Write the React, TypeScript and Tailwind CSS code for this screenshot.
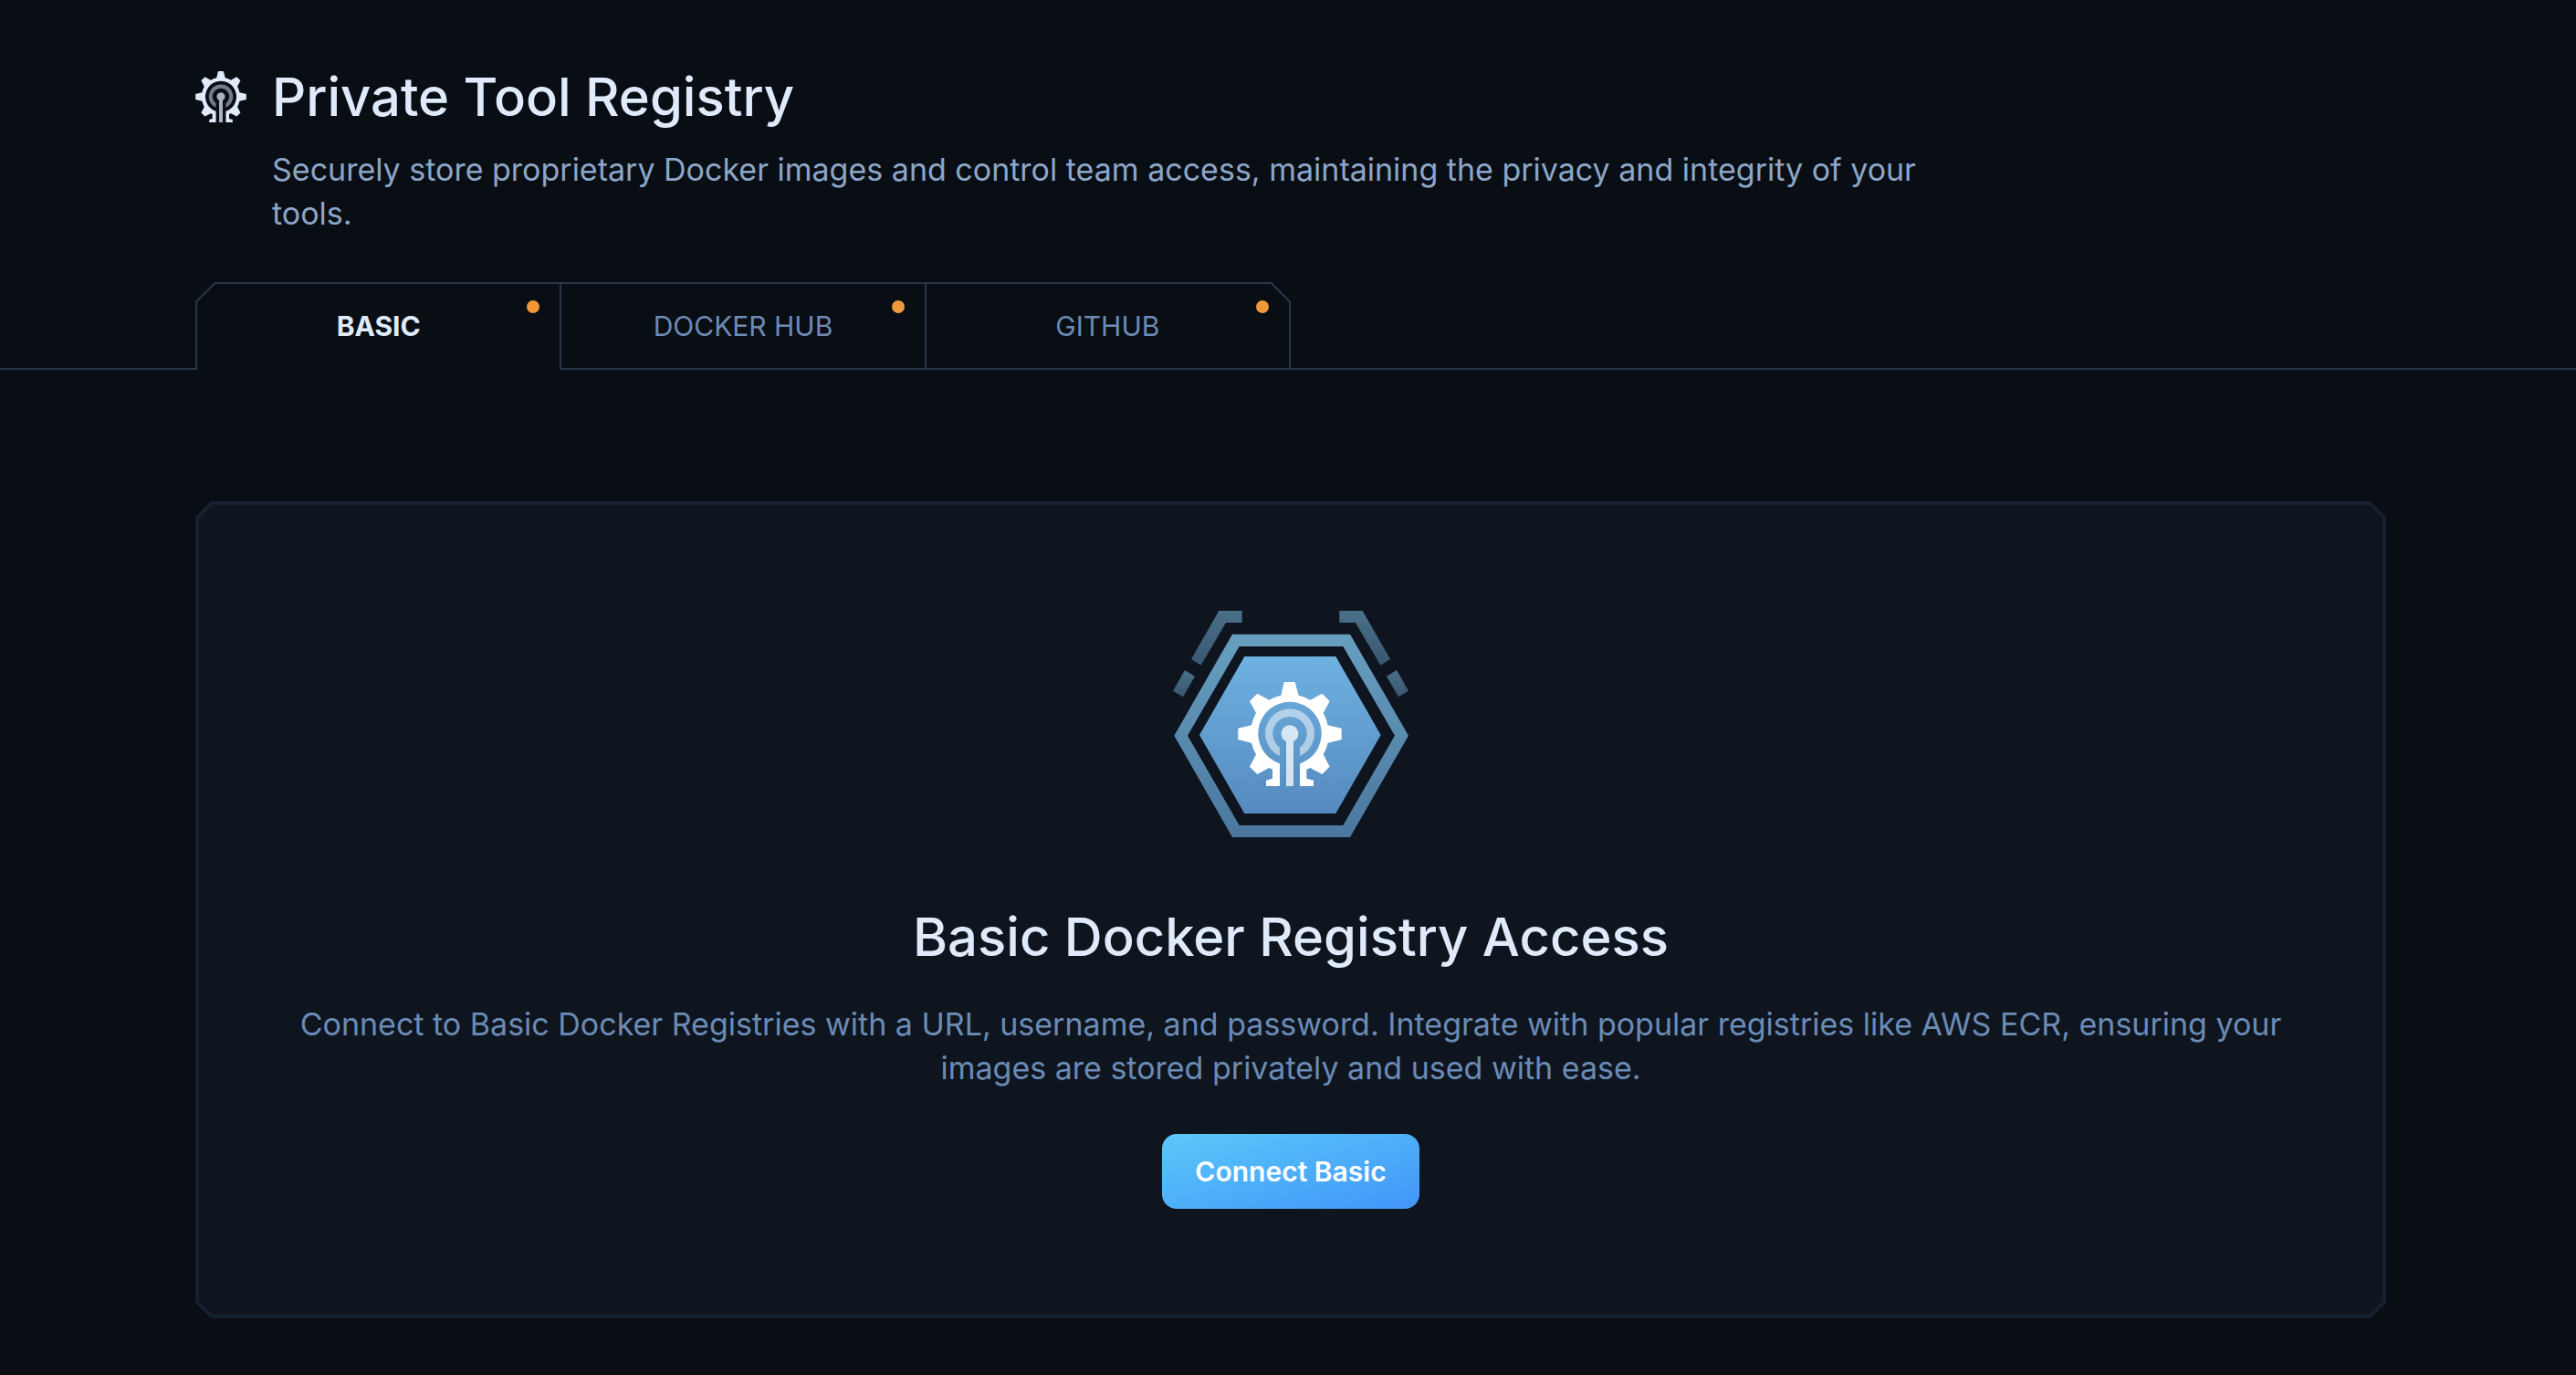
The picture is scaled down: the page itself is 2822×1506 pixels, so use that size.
import React, { useState } from 'react';

interface Tab {
  id: string;
  label: string;
  title: string;
  text: string;
  action: string;
  clip: string;
}

const TABS: Tab[] = [
  {
    id: 'basic',
    label: 'BASIC',
    title: 'Basic Docker Registry Access',
    text: 'Connect to Basic Docker Registries with a URL, username, and password. Integrate with popular registries like AWS ECR, ensuring your images are stored privately and used with ease.',
    action: 'Connect Basic',
    clip: '[clip-path:polygon(20px_0,100%_0,100%_100%,0_100%,0_20px)]',
  },
  {
    id: 'dockerhub',
    label: 'DOCKER HUB',
    title: 'Docker Hub Registry Access',
    text: 'Connect to Docker Hub with a username and an access token.',
    action: 'Connect Docker Hub',
    clip: '',
  },
  {
    id: 'github',
    label: 'GITHUB',
    title: 'GitHub Registry Access',
    text: 'Connect to the GitHub Container Registry with a username and an access token.',
    action: 'Connect GitHub',
    clip: '[clip-path:polygon(0_0,calc(100%-20px)_0,100%_20px,100%_100%,0_100%)]',
  },
];

// Gear with the broadcast symbol, drawn in a 342 x 342 box
function GearShapes() {
  return (
    <g transform="translate(-288 -291)" fill="currentColor">
      <path d="M440 291H476L488 335A130 130 0 0 1 526 350L565 329L590 354L569 393A130 130 0 0 1 584 433L629 443V480L584 491A130 130 0 0 1 569 529L590 569L565 594L526 573L514 578V608L537 614V633H492V559A104 104 0 1 0 426 559V633H381V614L402 608V578L391 573L352 594L327 569L348 529A130 130 0 0 1 333 491L289 480V443L333 433A130 130 0 0 1 348 393L327 354L352 329L391 350A130 130 0 0 1 430 335Z" />
      <path fillOpacity="0.5" d="M492 534A81 81 0 1 0 426 534V506A56 56 0 1 1 492 506Z" />
      <path fillOpacity="0.75" d="M447 486A28 28 0 1 1 471 486V633H447Z" />
    </g>
  );
}

function RegistryBadge() {
  return (
    <svg viewBox="75 57 774 744" className="h-[248px] w-[258px] text-white" aria-hidden="true">
      <defs>
        <linearGradient id="fill" x1="0" y1="0" x2="0" y2="1">
          <stop offset="0" stopColor="#6eb1e0" />
          <stop offset="1" stopColor="#568abf" />
        </linearGradient>
        <linearGradient id="ring" x1="0" y1="0" x2="0" y2="1">
          <stop offset="0" stopColor="#679fbf" />
          <stop offset="1" stopColor="#4b779f" />
        </linearGradient>
        <linearGradient id="edge" x1="0" y1="0" x2="0" y2="1">
          <stop offset="0" stopColor="#4a7089" />
          <stop offset="1" stopColor="#395673" />
        </linearGradient>
      </defs>
      <path fill="url(#edge)" d="M226 57H302V96H249L167 236L135 216Z" />
      <path fill="url(#edge)" d="M698 57H622V96H675L757 236L789 216Z" />
      <path fill="url(#edge)" d="M114 252L147 272L108 340L75 320Z" />
      <path fill="url(#edge)" d="M810 252L777 272L816 340L849 320Z" />
      <path
        fill="url(#ring)"
        fillRule="evenodd"
        d="M270 134H657L849 467L657 801H270L79 467ZM293 174L123 467L293 762H634L804 467L634 174Z"
      />
      <path fill="url(#fill)" d="M310 207H610L758 465L610 723H310L162 465Z" />
      <g transform="translate(288 291)">
        <GearShapes />
      </g>
    </svg>
  );
}

export default function App() {
  const [active, setActive] = useState('basic');
  const current = TABS.find((tab) => tab.id === active) ?? TABS[0];

  return (
    <div className="min-h-screen bg-[#090d14] pt-[70px] pb-[62px] font-[Inter,sans-serif] text-[#dfeafa]">
      <header className="mx-auto max-w-[2400px] translate-x-[3px]">
        <div className="flex items-center gap-7">
          <svg viewBox="0 0 342 342" className="size-14 shrink-0" aria-hidden="true">
            <GearShapes />
          </svg>
          <h1 className="text-[58px] leading-[72px] font-medium">Private Tool Registry</h1>
        </div>
        <p className="mt-5 ml-[84px] max-w-[1840px] text-[34px] leading-[48px] text-[#8ca6c8]">
          Securely store proprietary Docker images and control team access, maintaining the privacy
          and integrity of your tools.
        </p>
      </header>

      <div className="mt-[51px] border-b-2 border-[#28364b]">
        <div className="mx-auto max-w-[2400px] translate-x-[3px]">
          <div
            role="tablist"
            className="-mb-0.5 grid h-24 w-1/2 grid-cols-3 gap-0.5 bg-[#28364b] px-0.5 pt-0.5 [clip-path:polygon(21px_0,calc(100%-21px)_0,100%_21px,100%_100%,0_100%,0_21px)]"
          >
            {TABS.map((tab) => (
              <button
                key={tab.id}
                type="button"
                role="tab"
                aria-selected={tab.id === active}
                onClick={() => setActive(tab.id)}
                className={`relative bg-[#090d14] text-[30px] leading-10 ${tab.clip} ${
                  tab.id === active ? 'pb-0.5 font-bold' : 'mb-0.5 text-[#6b8bb6]'
                }`}
              >
                {tab.label}
                <span className="absolute top-[18px] right-[22px] size-3.5 rounded-full bg-[#f0983a]" />
              </button>
            ))}
          </div>
        </div>
      </div>

      <main className="mx-auto mt-36 max-w-[2400px] translate-x-[3px]">
        <div className="bg-[#17202e] p-1 [clip-path:polygon(17px_0,calc(100%-17px)_0,100%_17px,100%_calc(100%-17px),calc(100%-17px)_100%,17px_100%,0_calc(100%-17px),0_17px)]">
          <section className="flex flex-col items-center bg-[#0e151e] px-[100px] py-[116px] text-center [clip-path:polygon(15px_0,calc(100%-15px)_0,100%_15px,100%_calc(100%-15px),calc(100%-15px)_100%,15px_100%,0_calc(100%-15px),0_15px)]">
            <RegistryBadge />
            <h2 className="mt-[73px] text-[58px] leading-[72px] font-medium">{current.title}</h2>
            <p className="mt-9 text-[34px] leading-[48px] text-[#6b8bb6]">{current.text}</p>
            <button
              type="button"
              className="mt-12 h-[82px] rounded-2xl bg-linear-to-br from-[#5cc8fa] to-[#4295f8] px-9 text-[30px] font-semibold text-white"
            >
              {current.action}
            </button>
          </section>
        </div>
      </main>
    </div>
  );
}
